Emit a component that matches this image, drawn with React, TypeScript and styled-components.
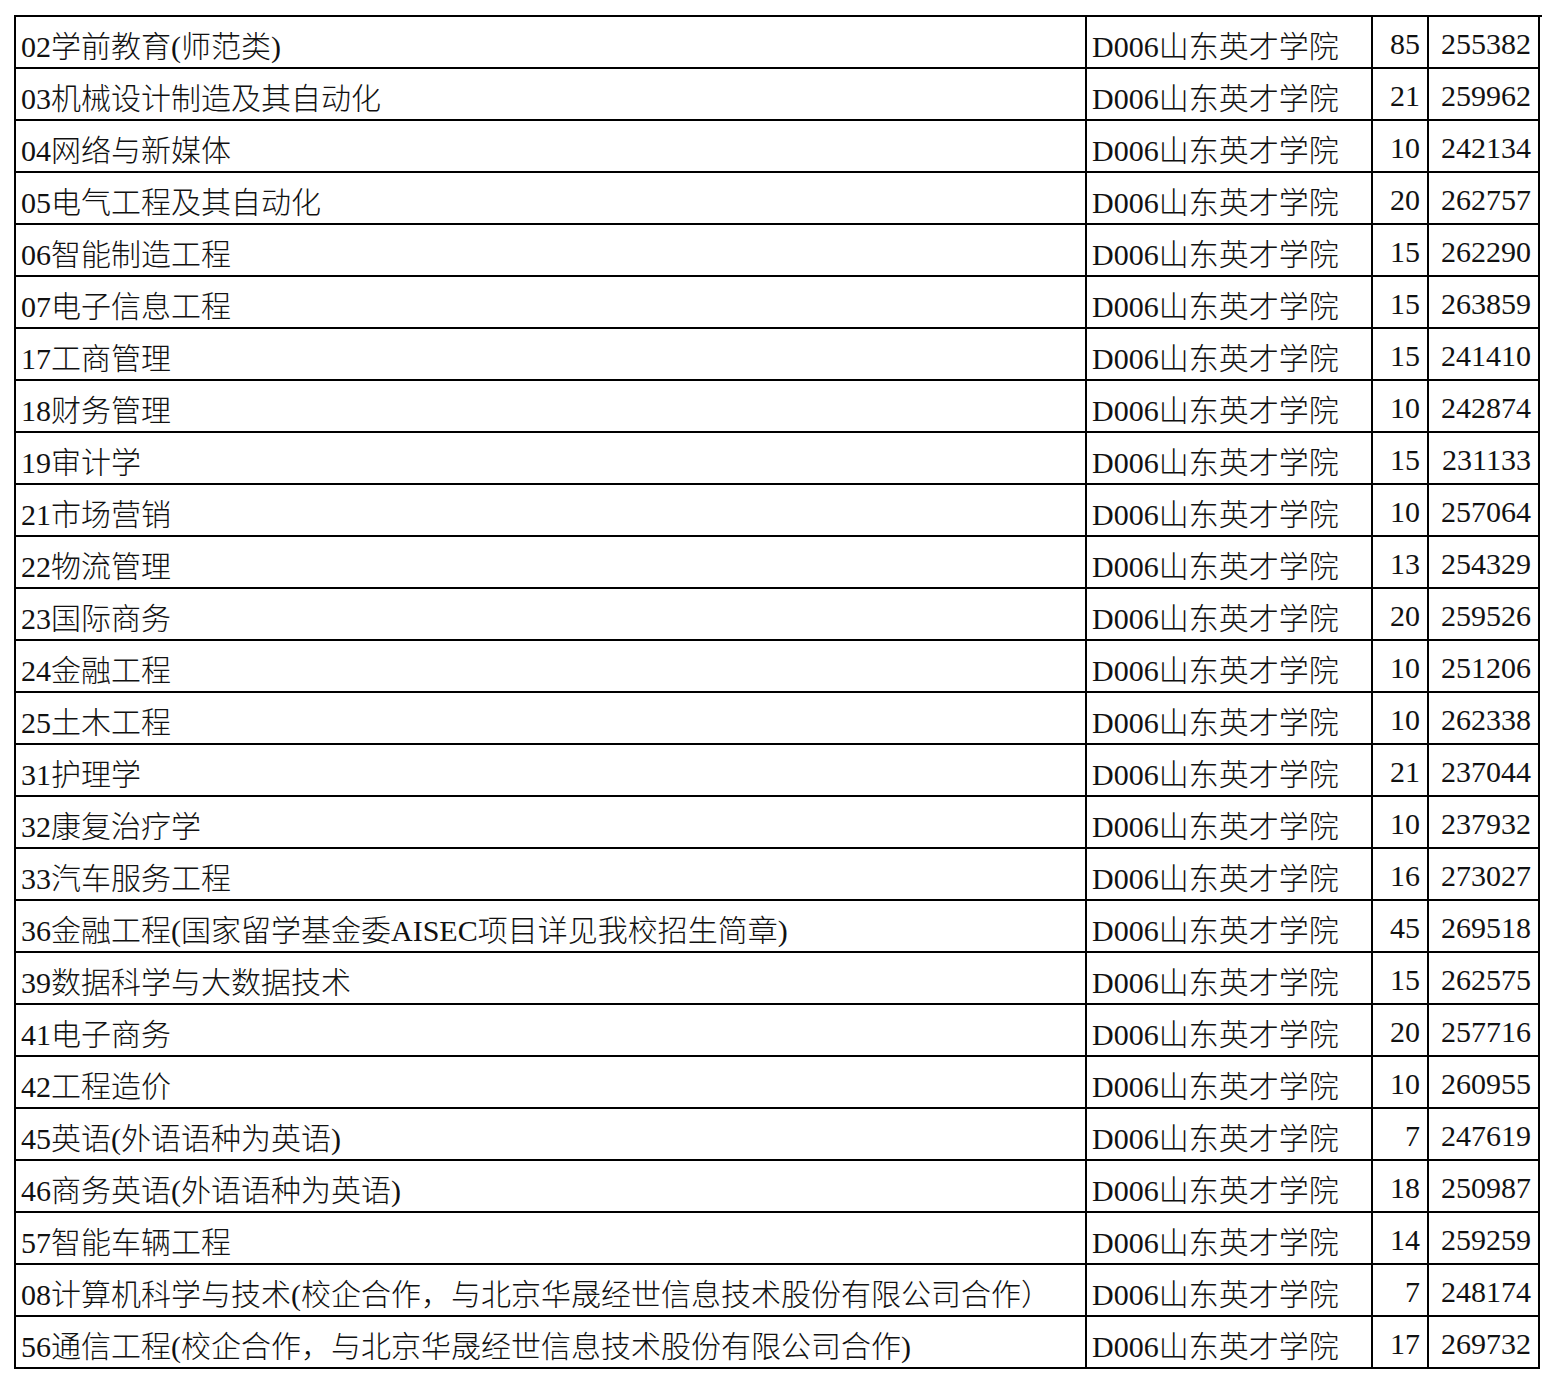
import styled, { createGlobalStyle } from 'styled-components'

const rows: [string, number, number][] = [
  ['02学前教育(师范类)', 85, 255382],
  ['03机械设计制造及其自动化', 21, 259962],
  ['04网络与新媒体', 10, 242134],
  ['05电气工程及其自动化', 20, 262757],
  ['06智能制造工程', 15, 262290],
  ['07电子信息工程', 15, 263859],
  ['17工商管理', 15, 241410],
  ['18财务管理', 10, 242874],
  ['19审计学', 15, 231133],
  ['21市场营销', 10, 257064],
  ['22物流管理', 13, 254329],
  ['23国际商务', 20, 259526],
  ['24金融工程', 10, 251206],
  ['25土木工程', 10, 262338],
  ['31护理学', 21, 237044],
  ['32康复治疗学', 10, 237932],
  ['33汽车服务工程', 16, 273027],
  ['36金融工程(国家留学基金委AISEC项目详见我校招生简章)', 45, 269518],
  ['39数据科学与大数据技术', 15, 262575],
  ['41电子商务', 20, 257716],
  ['42工程造价', 10, 260955],
  ['45英语(外语语种为英语)', 7, 247619],
  ['46商务英语(外语语种为英语)', 18, 250987],
  ['57智能车辆工程', 14, 259259],
  ['08计算机科学与技术(校企合作，与北京华晟经世信息技术股份有限公司合作）', 7, 248174],
  ['56通信工程(校企合作，与北京华晟经世信息技术股份有限公司合作)', 17, 269732],
]

const GlobalStyle = createGlobalStyle`
  body {
    margin: 0;
    background: #fff;
  }
`

const Sheet = styled.div`
  display: flex;
  flex-direction: column;
  width: 1526px;
  margin: 15px 0 0 14px;
  border-top: 2px solid #000;
  border-left: 2px solid #000;
  font-family: 'Liberation Serif', 'Noto Sans CJK SC', serif;
  font-weight: 300;
  font-size: 30px;
  color: #111;
`

const Row = styled.div`
  display: grid;
  grid-template-columns: 1071px 286px 56px 111px;
  height: 52px;
`

const Cell = styled.div<{ $right?: boolean }>`
  box-sizing: border-box;
  display: flex;
  align-items: center;
  justify-content: ${(p) => (p.$right ? 'flex-end' : 'flex-start')};
  padding: 4px ${(p) => (p.$right ? '7px' : '0')} 0 ${(p) => (p.$right ? '0' : '5px')};
  border-right: 2px solid #000;
  border-bottom: 2px solid #000;
  white-space: nowrap;
  overflow: hidden;
`

export default function App() {
  return (
    <>
      <GlobalStyle />
      <Sheet>
        {rows.map(([major, plan, rank]) => (
          <Row key={major}>
            <Cell>{major}</Cell>
            <Cell>D006山东英才学院</Cell>
            <Cell $right>{plan}</Cell>
            <Cell $right>{rank}</Cell>
          </Row>
        ))}
      </Sheet>
    </>
  )
}
